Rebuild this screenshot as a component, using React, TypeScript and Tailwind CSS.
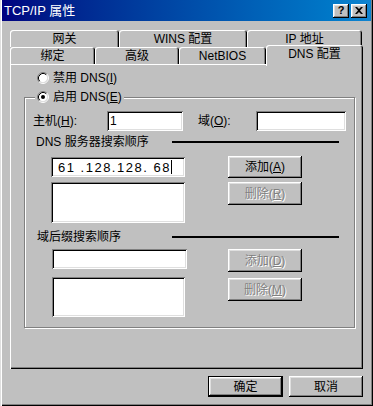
import React from "react";

const raised =
  "shadow-[inset_-1px_-1px_#000,inset_1px_1px_#fff,inset_-2px_-2px_#808080,inset_2px_2px_#dfdfdf]";
const sunken =
  "shadow-[inset_1px_1px_#808080,inset_-1px_-1px_#fff,inset_2px_2px_#000,inset_-2px_-2px_#dfdfdf]";

function Radio({ checked }: { checked?: boolean }) {
  return (
    <svg width="12" height="12" viewBox="0 0 12 12" className="shrink-0">
      <circle cx="6" cy="6" r="4.5" fill="#fff" />
      <path d="M2.11 9.89 A5.5 5.5 0 0 1 9.89 2.11" stroke="#808080" fill="none" />
      <path d="M9.89 2.11 A5.5 5.5 0 0 1 2.11 9.89" stroke="#fff" fill="none" />
      <path d="M2.82 9.18 A4.5 4.5 0 0 1 9.18 2.82" stroke="#000" fill="none" />
      <path d="M9.18 2.82 A4.5 4.5 0 0 1 2.82 9.18" stroke="#dfdfdf" fill="none" />
      {checked && <circle cx="6" cy="6" r="2" fill="#000" />}
    </svg>
  );
}

function Tab({ label, w, selected }: { label: string; w: string; selected?: boolean }) {
  if (selected) {
    return (
      <div
        className={`${w} relative z-10 -mt-[2px] h-[21px] pb-[3px] flex items-center justify-center rounded-t-[3px] bg-[#c0c0c0] shadow-[inset_1px_1px_#fff,inset_-1px_0_#000,inset_-2px_0_#808080]`}
      >
        {label}
      </div>
    );
  }
  return (
    <div
      className={`${w} h-[17px] flex items-center justify-center rounded-t-[3px] bg-[#c0c0c0] shadow-[inset_1px_1px_#fff,inset_-1px_0_#000,inset_-2px_0_#808080]`}
    >
      {label}
    </div>
  );
}

function Btn({
  children,
  className = "",
  disabled,
}: {
  children: React.ReactNode;
  className?: string;
  disabled?: boolean;
}) {
  return (
    <div
      className={`${className} ${raised} flex items-center justify-center bg-[#c0c0c0] ${
        disabled ? "text-[#808080] [text-shadow:1px_1px_0_#fff]" : "text-black"
      }`}
    >
      {children}
    </div>
  );
}

function Field({ className = "", children }: { className?: string; children?: React.ReactNode }) {
  return <div className={`${className} ${sunken} bg-white flex items-center`}>{children}</div>;
}

export default function App() {
  return (
    <div className="w-[373px] h-[406px] overflow-hidden bg-[#c0c0c0] flex flex-col text-[12px] leading-none text-black font-['Liberation_Sans','Noto_Sans_CJK_SC',sans-serif] shadow-[inset_1px_0_#dfdfdf,inset_2px_0_#fff,inset_-1px_-1px_#000,inset_-2px_-2px_#808080]">
      {/* title bar */}
      <div className="mx-[2px] h-[21px] shrink-0 flex items-center bg-linear-to-r from-[#000080] to-[#1084d0] pl-[2px] pr-[4px]">
        <span className="flex-1 text-white text-[13px]">TCP/IP 属性</span>
        <div className="flex gap-[2px]">
          <div className={`${raised} w-[16px] h-[14px] bg-[#c0c0c0] flex items-center justify-center text-[11px] font-bold`}>
            ?
          </div>
          <div className={`${raised} w-[16px] h-[14px] bg-[#c0c0c0] flex items-center justify-center`}>
            <svg width="8" height="7" viewBox="0 0 8 7">
              <path d="M0 0h2l2 2 2-2h2L5 3.5 8 7H6L4 5 2 7H0l3-3.5z" fill="#000" />
            </svg>
          </div>
        </div>
      </div>

      {/* tabs */}
      <div className="ml-[10px] mt-[9px] flex h-[17px] shrink-0">
        <Tab label="网关" w="w-[109px]" />
        <Tab label="WINS 配置" w="w-[128px]" />
        <Tab label="IP 地址" w="w-[115px]" />
      </div>
      <div className="ml-[10px] flex h-[17px] shrink-0 items-start">
        <Tab label="绑定" w="w-[85px]" />
        <Tab label="高级" w="w-[84px]" />
        <Tab label="NetBIOS" w="w-[87px]" />
        <Tab label="DNS 配置" w="w-[97px]" selected />
      </div>

      {/* panel */}
      <div className="ml-[10px] w-[353px] h-[305px] shrink-0 flex flex-col shadow-[inset_1px_1px_#fff,inset_-1px_-1px_#000,inset_-2px_-2px_#808080]">
        <div className="mt-[6px] ml-[27px] flex h-[16px] items-center gap-[4px]">
          <Radio />
          <span>
            禁用 DNS(<u>I</u>)
          </span>
        </div>

        <div className="relative mt-[11px] ml-[14px] w-[331px] h-[231px] flex flex-col border border-[#808080] shadow-[inset_1px_1px_#fff,1px_1px_#fff]">
          <div className="absolute -top-[9px] left-[10px] h-[16px] px-[2px] flex items-center gap-[4px] bg-[#c0c0c0]">
            <Radio checked />
            <span>
              启用 DNS(<u>E</u>)
            </span>
          </div>

          <div className="mt-[13px] ml-[8px] h-[20px] flex items-center">
            <span className="w-[74px]">
              主机(<u>H</u>):
            </span>
            <Field className="w-[76px] h-[20px] pl-[3px]">1</Field>
            <span className="w-[73px] pl-[15px]">
              域(<u>O</u>):
            </span>
            <Field className="w-[90px] h-[20px]" />
          </div>

          <div className="mt-[4px] ml-[11px] h-[14px] flex items-center">
            <span className="w-[136px]">DNS 服务器搜索顺序</span>
            <div className="w-[167px] h-[2px] bg-black" />
          </div>

          <div className="mt-[7px] ml-[26px] flex items-start">
            <Field className="mt-[1px] w-[134px] h-[20px] pl-[7px]">
              <span className="whitespace-pre text-[13px] tracking-[1.5px]">61 .128.128. 68</span>
              <span className="w-[1px] h-[14px] bg-black" />
            </Field>
            <Btn className="ml-[43px] w-[74px] h-[22px]">
              添加(<u>A</u>)
            </Btn>
          </div>

          <div className="mt-[4px] ml-[26px] flex items-start">
            <Field className="w-[134px] h-[41px]" />
            <Btn className="ml-[43px] w-[74px] h-[23px]" disabled>
              删除(<u>R</u>)
            </Btn>
          </div>

          <div className="mt-[7px] ml-[12px] h-[14px] flex items-center">
            <span className="w-[135px]">域后缀搜索顺序</span>
            <div className="w-[167px] h-[2px] bg-black" />
          </div>

          <div className="mt-[5px] ml-[27px] flex items-start">
            <Field className="w-[135px] h-[20px]" />
            <Btn className="ml-[41px] w-[74px] h-[23px]" disabled>
              添加(<u>D</u>)
            </Btn>
          </div>

          <div className="mt-[5px] ml-[27px] flex items-start">
            <Field className="w-[133px] h-[40px]" />
            <Btn className="ml-[43px] mt-[1px] w-[74px] h-[23px]" disabled>
              删除(<u>M</u>)
            </Btn>
          </div>
        </div>
      </div>

      {/* dialog buttons */}
      <div className="mt-[7px] pr-[10px] flex justify-end gap-[6px]">
        <div className="w-[75px] h-[21px] border border-black">
          <Btn className="w-full h-full">确定</Btn>
        </div>
        <Btn className="w-[74px] h-[21px]">取消</Btn>
      </div>
    </div>
  );
}
